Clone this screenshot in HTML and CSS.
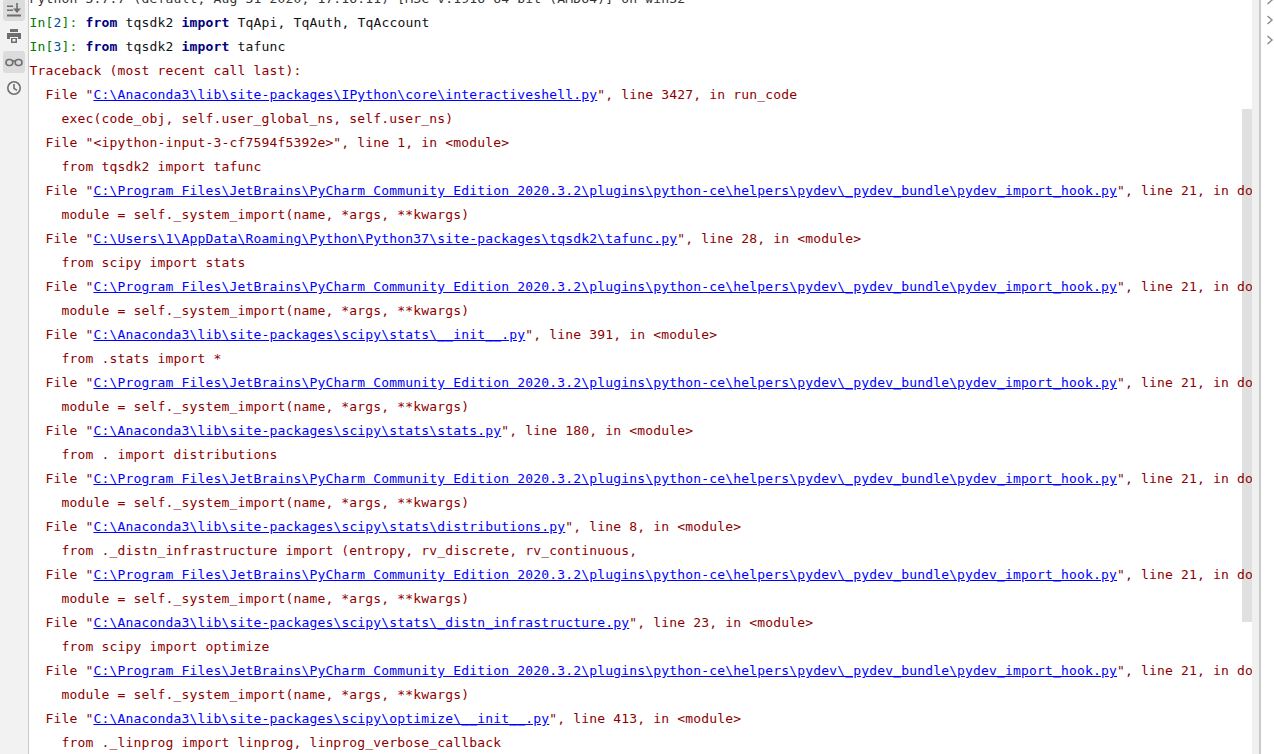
FILE: index.html
```html
<!DOCTYPE html>
<html lang="en">
<head>
<meta charset="utf-8">
<title>Python Console</title>
<link rel="stylesheet" href="styles.css">
</head>
<body>
<div class="app">
  <aside class="toolbar">
    <button class="tool active"><svg viewBox="0 0 16 16" class="ico"><path d="M1 3.500h6v1.500H1zM1 7.500h6v1.500H1zM1 12.500h14V14.500H1zM10.200 1h1.600v5.500H15l-4 4.500-4-4.500h3.200z"/></svg></button>
    <button class="tool"><svg viewBox="0 0 16 16" class="ico"><path d="M4 1h8v3H4zM1 5h14v6h-3V9H4v2H1zM5 10h6v5H5z"/><path d="M6.500 11h3v2.500h-3z" class="hole"/></svg></button>
    <button class="tool active"><svg viewBox="0 0 18 16" class="ico wide"><rect x="1" y="5.500" width="6.800" height="6" rx="3" class="ln"/><rect x="10.200" y="5.500" width="6.800" height="6" rx="3" class="ln"/><path d="M7.800 7h2.400" class="ln"/></svg></button>
    <button class="tool"><svg viewBox="0 0 16 16" class="ico"><circle cx="8" cy="8" r="6.200" class="ln"/><path d="M8 4v4.400l3 2" class="ln"/></svg></button>
  </aside>
  <main class="console">
    <div class="thumb"></div>
    <pre class="out">
<span class="sys">Python 3.7.7 (default, Aug 31 2020, 17:16:11) [MSC v.1916 64 bit (AMD64)] on win32</span>
<span class="pr">In[<b>2</b>]: </span><b class="kw">from</b> tqsdk2 <b class="kw">import</b> TqApi, TqAuth, TqAccount
<span class="pr">In[<b>3</b>]: </span><b class="kw">from</b> tqsdk2 <b class="kw">import</b> tafunc
<span class="err">Traceback (most recent call last):
  File "<a>C:\Anaconda3\lib\site-packages\IPython\core\interactiveshell.py</a>", line 3427, in run_code
    exec(code_obj, self.user_global_ns, self.user_ns)
  File "&lt;ipython-input-3-cf7594f5392e&gt;", line 1, in &lt;module&gt;
    from tqsdk2 import tafunc
  File "<a>C:\Program Files\JetBrains\PyCharm Community Edition 2020.3.2\plugins\python-ce\helpers\pydev\_pydev_bundle\pydev_import_hook.py</a>", line 21, in do_import
    module = self._system_import(name, *args, **kwargs)
  File "<a>C:\Users\1\AppData\Roaming\Python\Python37\site-packages\tqsdk2\tafunc.py</a>", line 28, in &lt;module&gt;
    from scipy import stats
  File "<a>C:\Program Files\JetBrains\PyCharm Community Edition 2020.3.2\plugins\python-ce\helpers\pydev\_pydev_bundle\pydev_import_hook.py</a>", line 21, in do_import
    module = self._system_import(name, *args, **kwargs)
  File "<a>C:\Anaconda3\lib\site-packages\scipy\stats\__init__.py</a>", line 391, in &lt;module&gt;
    from .stats import *
  File "<a>C:\Program Files\JetBrains\PyCharm Community Edition 2020.3.2\plugins\python-ce\helpers\pydev\_pydev_bundle\pydev_import_hook.py</a>", line 21, in do_import
    module = self._system_import(name, *args, **kwargs)
  File "<a>C:\Anaconda3\lib\site-packages\scipy\stats\stats.py</a>", line 180, in &lt;module&gt;
    from . import distributions
  File "<a>C:\Program Files\JetBrains\PyCharm Community Edition 2020.3.2\plugins\python-ce\helpers\pydev\_pydev_bundle\pydev_import_hook.py</a>", line 21, in do_import
    module = self._system_import(name, *args, **kwargs)
  File "<a>C:\Anaconda3\lib\site-packages\scipy\stats\distributions.py</a>", line 8, in &lt;module&gt;
    from ._distn_infrastructure import (entropy, rv_discrete, rv_continuous,
  File "<a>C:\Program Files\JetBrains\PyCharm Community Edition 2020.3.2\plugins\python-ce\helpers\pydev\_pydev_bundle\pydev_import_hook.py</a>", line 21, in do_import
    module = self._system_import(name, *args, **kwargs)
  File "<a>C:\Anaconda3\lib\site-packages\scipy\stats\_distn_infrastructure.py</a>", line 23, in &lt;module&gt;
    from scipy import optimize
  File "<a>C:\Program Files\JetBrains\PyCharm Community Edition 2020.3.2\plugins\python-ce\helpers\pydev\_pydev_bundle\pydev_import_hook.py</a>", line 21, in do_import
    module = self._system_import(name, *args, **kwargs)
  File "<a>C:\Anaconda3\lib\site-packages\scipy\optimize\__init__.py</a>", line 413, in &lt;module&gt;
    from ._linprog import linprog, linprog_verbose_callback</span></pre>
  </main>
  <div class="track"></div>
  <aside class="vars">
    <svg viewBox="0 0 8 10" class="chev"><path d="M1.500 1l4.500 4-4.500 4"/></svg>
    <svg viewBox="0 0 8 10" class="chev"><path d="M1.500 1l4.500 4-4.500 4"/></svg>
    <svg viewBox="0 0 8 10" class="chev"><path d="M1.500 1l4.500 4-4.500 4"/></svg>
  </aside>
</div>
</body>
</html>
```
FILE: styles.css
```css
* { box-sizing: border-box; }
html, body { margin: 0; height: 100%; overflow: hidden; background: #fff; }
.app { display: flex; height: 754px; width: 1274px; }
.toolbar { width: 29px; flex: none; background: #f2f2f2; border-right: 1px solid #c9c9c9; display: flex; flex-direction: column; align-items: center; gap: 4px; }
.tool { width: 22px; height: 22px; flex: none; padding: 0; border: 0; border-radius: 3px; background: transparent; display: flex; align-items: center; justify-content: center; }
.tool:first-child { margin-top: -1px; }
.tool.active { background: #dcdcdc; }
.ico { width: 16px; height: 16px; fill: #6e6e6e; }
.ico.wide { width: 18px; }
.hole { fill: #f2f2f2; }
.ln { fill: none; stroke: #6e6e6e; stroke-width: 1.600; }
.console { position: relative; flex: 1; min-width: 0; overflow: hidden; background: #fff; }
.out { position: relative; margin: -13px 0 0; padding: 0 0 0 0.5px; font-family: "DejaVu Sans Mono", monospace; font-size: 13px; letter-spacing: 0.17px; line-height: 24px; color: #111; white-space: pre; }
.out > :first-child { color: #333; }
.pr { color: #007a00; }
.pr b { font-weight: 400; color: #0050a0; }
.kw { color: #000080; font-weight: 700; }
.err { color: #8c0000; }
.err a { color: #0000ff; text-decoration: underline; }
.thumb { position: absolute; top: 109px; right: 0; width: 10px; height: 513px; background: #e0e0e0; }
.track { width: 7px; flex: none; background: #f0f0f0; }
.vars { width: 15px; flex: none; border-left: 2px solid #c9c9c9; display: flex; flex-direction: column; align-items: flex-end; gap: 10px; overflow: hidden; }
.chev { width: 8px; height: 10px; margin: -5px 0 0 0; fill: none; stroke: #8c8c8c; stroke-width: 1.400; flex: none; }
.chev + .chev { margin-top: 0; }
```
